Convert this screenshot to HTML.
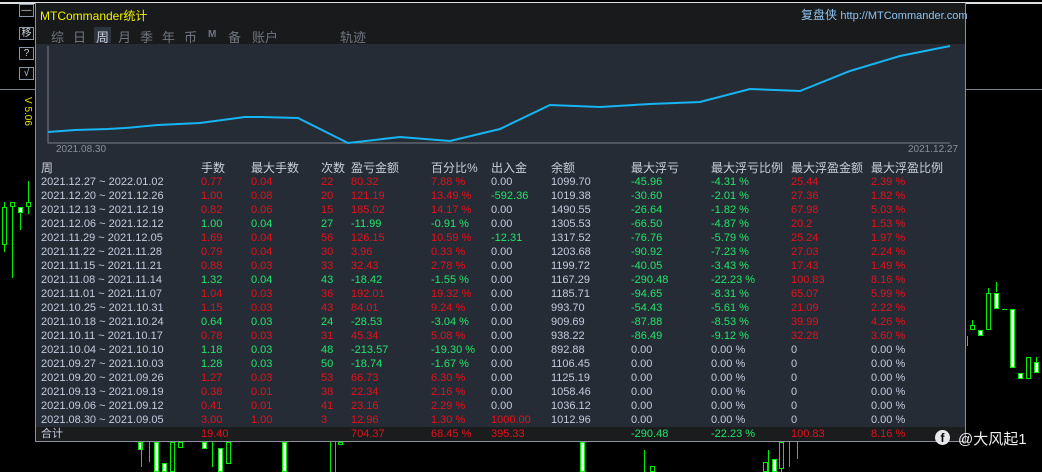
<!DOCTYPE html>
<html><head><meta charset="utf-8"><style>
*{margin:0;padding:0;box-sizing:border-box}
body{width:1042px;height:472px;background:#000;position:relative;overflow:hidden;font-family:"Liberation Sans","Noto Sans CJK SC",sans-serif;font-size:11px;color:#c3cde0}
.a{position:absolute}
.panel{left:35px;top:3px;width:931px;height:439px;background:#262c35;border-left:1px solid #8a909a;border-right:1px solid #8a909a;border-bottom:1px solid #8a909a}
.bar{left:36px;top:3px;width:929px;height:41px;background:#191a1b}
.r{position:absolute;left:0;width:1042px;height:14px;line-height:14px;white-space:nowrap}
.r span{position:absolute}
.r span:nth-child(1){left:41px}.r span:nth-child(2){left:201px}.r span:nth-child(3){left:251px}.r span:nth-child(4){left:321px}.r span:nth-child(5){left:351px}.r span:nth-child(6){left:431px}.r span:nth-child(7){left:491px}.r span:nth-child(8){left:551px}.r span:nth-child(9){left:631px}.r span:nth-child(10){left:711px}.r span:nth-child(11){left:791px}.r span:nth-child(12){left:871px}
.R{color:#e4101c}.G{color:#22e46a}
.h{font-size:12px;color:#c8d0dc}
.btn{left:19px;width:15px;height:13px;border:1px solid #8a96a8;color:#c8d0dc;font-size:10px;line-height:11px;text-align:center;background:#0a0a0a}
.tab{top:27px;font-size:13px;color:#6f7680}
.c{position:absolute;border:1px solid #00ee00;background:#000}
.w{position:absolute;width:1px;background:#00ee00}
</style></head><body>
<div class="a" style="left:0;top:2px;width:1042px;height:2px;background:#e0e0e0"></div>
<div class="a" style="left:0;top:89px;width:1042px;height:1px;background:#7a808a"></div>
<!-- left buttons -->
<div class="a btn" style="top:4px">—</div>
<div class="a btn" style="top:27px">移</div>
<div class="a btn" style="top:47px">?</div>
<div class="a btn" style="top:67px">√</div>
<div class="a" style="left:20px;top:97px;color:#e8e800;font-size:10px;transform:rotate(90deg);transform-origin:left top;left:33px;white-space:nowrap">V 5.06</div>
<!-- left candles -->
<div class="w" style="left:4px;top:202px;height:50px"></div><div class="c" style="left:2px;top:207px;width:5px;height:38px"></div>
<div class="w" style="left:12px;top:205px;height:73px"></div><div class="c" style="left:10px;top:202px;width:5px;height:5px"></div>
<div class="w" style="left:20px;top:210px;height:20px"></div><div class="c" style="left:18px;top:207px;width:5px;height:6px;background:#fff"></div>
<div class="w" style="left:28px;top:181px;height:33px"></div><div class="c" style="left:26px;top:202px;width:5px;height:5px"></div>
<!-- right candles -->
<div class="w" style="left:967px;top:336px;height:10px"></div>
<div class="w" style="left:972px;top:320px;height:10px"></div><div class="c" style="left:970px;top:325px;width:5px;height:5px"></div>
<div class="c" style="left:978px;top:330px;width:5px;height:6px;background:#fff"></div>
<div class="w" style="left:988px;top:288px;height:10px"></div><div class="c" style="left:986px;top:293px;width:5px;height:37px"></div>
<div class="w" style="left:996px;top:282px;height:10px"></div><div class="c" style="left:994px;top:293px;width:5px;height:16px;background:#fff"></div>
<div class="a" style="left:1002px;top:309px;width:5px;height:1px;background:#0e0"></div>
<div class="c" style="left:1010px;top:309px;width:5px;height:59px;background:#fff"></div>
<div class="c" style="left:1018px;top:373px;width:5px;height:6px;background:#fff"></div>
<div class="c" style="left:1026px;top:357px;width:5px;height:22px"></div>
<div class="w" style="left:1036px;top:357px;height:15px"></div><div class="c" style="left:1034px;top:362px;width:5px;height:11px;background:#fff"></div>
<!-- bottom candles -->
<div class="c" style="left:138px;top:442px;width:5px;height:8px;background:#fff"></div>
<div class="w" style="left:141px;top:442px;height:25px"></div>
<div class="w" style="left:149px;top:442px;height:20px"></div>
<div class="c" style="left:154px;top:442px;width:5px;height:30px;background:#fff"></div>
<div class="c" style="left:162px;top:463px;width:5px;height:9px;background:#fff"></div>
<div class="c" style="left:170px;top:442px;width:5px;height:30px"></div>
<div class="c" style="left:178px;top:442px;width:5px;height:6px"></div>
<div class="c" style="left:202px;top:442px;width:5px;height:7px;background:#fff"></div>
<div class="w" style="left:212px;top:442px;height:25px"></div>
<div class="c" style="left:218px;top:448px;width:5px;height:24px;background:#fff"></div>
<div class="c" style="left:226px;top:442px;width:5px;height:22px"></div>
<div class="c" style="left:282px;top:442px;width:5px;height:30px;background:#fff"></div>
<div class="w" style="left:330px;top:442px;height:30px"></div>
<div class="w" style="left:335px;top:442px;height:30px"></div>
<div class="c" style="left:338px;top:442px;width:5px;height:3px"></div>
<div class="w" style="left:644px;top:450px;height:22px"></div>
<div class="c" style="left:650px;top:466px;width:5px;height:6px"></div>
<div class="c" style="left:763px;top:462px;width:5px;height:10px"></div>
<div class="w" style="left:768px;top:450px;height:22px"></div>
<div class="c" style="left:772px;top:459px;width:5px;height:13px;background:#fff"></div>
<div class="w" style="left:781px;top:442px;height:30px"></div><div class="c" style="left:779px;top:442px;width:5px;height:27px"></div>
<div class="w" style="left:789px;top:442px;height:25px"></div>
<div class="w" style="left:797px;top:442px;height:17px"></div>
<div class="c" style="left:580px;top:442px;width:5px;height:30px;background:#fff"></div>
<!-- panel -->
<div class="a panel"></div>
<div class="a bar"></div>
<div class="a" style="left:40px;top:7px;color:#f0f000;font-size:12px">MTCommander统计</div>
<div class="a" style="left:801px;top:6px;color:#8ec4f0;font-size:12px">复盘侠 <span style="font-size:11px">http://MTCommander.com</span></div>
<div class="a" style="left:94px;top:27px;width:17px;height:16px;background:#2c3440"></div>
<div class="a tab" style="left:51px">综</div><div class="a tab" style="left:73px">日</div><div class="a tab" style="left:96px;color:#c8d0dc">周</div><div class="a tab" style="left:118px">月</div><div class="a tab" style="left:140px">季</div><div class="a tab" style="left:162px">年</div><div class="a tab" style="left:184px">币</div><div class="a tab" style="left:208px;font-size:10px;top:29px;font-weight:bold">M</div><div class="a tab" style="left:228px">备</div><div class="a tab" style="left:252px">账户</div><div class="a tab" style="left:340px">轨迹</div>
<svg class="a" style="left:0;top:0" width="1042" height="160">
<polyline points="48,46 48,143 950,143" fill="none" stroke="#7a7f86" stroke-width="1"/>
<polyline points="48,132 75,130 108,129 125,128 158,125 200,123 245,117 262,117 298,118 348,143 400,137 450,141 500,129 550,105 600,107 650,104 700,102 750,89 800,91 850,71 900,56 950,46" fill="none" stroke="#16b4f2" stroke-width="2"/>
</svg>
<div class="a" style="left:56px;top:144px;font-size:10px;color:#8a909a">2021.08.30</div>
<div class="a" style="left:908px;top:144px;font-size:10px;color:#8a909a">2021.12.27</div>
<div class="r h" style="top:161px"><span>周</span><span>手数</span><span>最大手数</span><span>次数</span><span>盈亏金额</span><span>百分比%</span><span>出入金</span><span>余额</span><span>最大浮亏</span><span>最大浮亏比例</span><span>最大浮盈金额</span><span>最大浮盈比例</span></div>
<div class="r" style="top:175px"><span>2021.12.27 ~ 2022.01.02</span><span class="R">0.77</span><span class="R">0.04</span><span class="R">22</span><span class="R">80.32</span><span class="R">7.88 %</span><span>0.00</span><span>1099.70</span><span class="G">-45.96</span><span class="G">-4.31 %</span><span class="R">25.44</span><span class="R">2.39 %</span></div>
<div class="r" style="top:189px"><span>2021.12.20 ~ 2021.12.26</span><span class="R">1.00</span><span class="R">0.08</span><span class="R">20</span><span class="R">121.19</span><span class="R">13.49 %</span><span class="G">-592.36</span><span>1019.38</span><span class="G">-30.60</span><span class="G">-2.01 %</span><span class="R">27.36</span><span class="R">1.82 %</span></div>
<div class="r" style="top:203px"><span>2021.12.13 ~ 2021.12.19</span><span class="R">0.82</span><span class="R">0.06</span><span class="R">15</span><span class="R">185.02</span><span class="R">14.17 %</span><span>0.00</span><span>1490.55</span><span class="G">-26.64</span><span class="G">-1.82 %</span><span class="R">67.98</span><span class="R">5.03 %</span></div>
<div class="r" style="top:217px"><span>2021.12.06 ~ 2021.12.12</span><span class="G">1.00</span><span class="G">0.04</span><span class="G">27</span><span class="G">-11.99</span><span class="G">-0.91 %</span><span>0.00</span><span>1305.53</span><span class="G">-66.50</span><span class="G">-4.87 %</span><span class="R">20.2</span><span class="R">1.53 %</span></div>
<div class="r" style="top:231px"><span>2021.11.29 ~ 2021.12.05</span><span class="R">1.69</span><span class="R">0.04</span><span class="R">56</span><span class="R">126.15</span><span class="R">10.59 %</span><span class="G">-12.31</span><span>1317.52</span><span class="G">-76.76</span><span class="G">-5.79 %</span><span class="R">25.24</span><span class="R">1.97 %</span></div>
<div class="r" style="top:245px"><span>2021.11.22 ~ 2021.11.28</span><span class="R">0.79</span><span class="R">0.04</span><span class="R">30</span><span class="R">3.96</span><span class="R">0.33 %</span><span>0.00</span><span>1203.68</span><span class="G">-90.92</span><span class="G">-7.23 %</span><span class="R">27.03</span><span class="R">2.24 %</span></div>
<div class="r" style="top:259px"><span>2021.11.15 ~ 2021.11.21</span><span class="R">0.88</span><span class="R">0.03</span><span class="R">33</span><span class="R">32.43</span><span class="R">2.78 %</span><span>0.00</span><span>1199.72</span><span class="G">-40.05</span><span class="G">-3.43 %</span><span class="R">17.43</span><span class="R">1.49 %</span></div>
<div class="r" style="top:273px"><span>2021.11.08 ~ 2021.11.14</span><span class="G">1.32</span><span class="G">0.04</span><span class="G">43</span><span class="G">-18.42</span><span class="G">-1.55 %</span><span>0.00</span><span>1167.29</span><span class="G">-290.48</span><span class="G">-22.23 %</span><span class="R">100.83</span><span class="R">8.16 %</span></div>
<div class="r" style="top:287px"><span>2021.11.01 ~ 2021.11.07</span><span class="R">1.04</span><span class="R">0.03</span><span class="R">36</span><span class="R">192.01</span><span class="R">19.32 %</span><span>0.00</span><span>1185.71</span><span class="G">-94.65</span><span class="G">-8.31 %</span><span class="R">65.07</span><span class="R">5.99 %</span></div>
<div class="r" style="top:301px"><span>2021.10.25 ~ 2021.10.31</span><span class="R">1.15</span><span class="R">0.03</span><span class="R">43</span><span class="R">84.01</span><span class="R">9.24 %</span><span>0.00</span><span>993.70</span><span class="G">-54.43</span><span class="G">-5.61 %</span><span class="R">21.09</span><span class="R">2.22 %</span></div>
<div class="r" style="top:315px"><span>2021.10.18 ~ 2021.10.24</span><span class="G">0.64</span><span class="G">0.03</span><span class="G">24</span><span class="G">-28.53</span><span class="G">-3.04 %</span><span>0.00</span><span>909.69</span><span class="G">-87.88</span><span class="G">-8.53 %</span><span class="R">39.99</span><span class="R">4.26 %</span></div>
<div class="r" style="top:329px"><span>2021.10.11 ~ 2021.10.17</span><span class="R">0.78</span><span class="R">0.03</span><span class="R">31</span><span class="R">45.34</span><span class="R">5.08 %</span><span>0.00</span><span>938.22</span><span class="G">-86.49</span><span class="G">-9.12 %</span><span class="R">32.28</span><span class="R">3.60 %</span></div>
<div class="r" style="top:343px"><span>2021.10.04 ~ 2021.10.10</span><span class="G">1.18</span><span class="G">0.03</span><span class="G">48</span><span class="G">-213.57</span><span class="G">-19.30 %</span><span>0.00</span><span>892.88</span><span>0.00</span><span>0.00 %</span><span>0</span><span>0.00 %</span></div>
<div class="r" style="top:357px"><span>2021.09.27 ~ 2021.10.03</span><span class="G">1.28</span><span class="G">0.03</span><span class="G">50</span><span class="G">-18.74</span><span class="G">-1.67 %</span><span>0.00</span><span>1106.45</span><span>0.00</span><span>0.00 %</span><span>0</span><span>0.00 %</span></div>
<div class="r" style="top:371px"><span>2021.09.20 ~ 2021.09.26</span><span class="R">1.27</span><span class="R">0.03</span><span class="R">53</span><span class="R">66.73</span><span class="R">6.30 %</span><span>0.00</span><span>1125.19</span><span>0.00</span><span>0.00 %</span><span>0</span><span>0.00 %</span></div>
<div class="r" style="top:385px"><span>2021.09.13 ~ 2021.09.19</span><span class="R">0.38</span><span class="R">0.01</span><span class="R">38</span><span class="R">22.34</span><span class="R">2.16 %</span><span>0.00</span><span>1058.46</span><span>0.00</span><span>0.00 %</span><span>0</span><span>0.00 %</span></div>
<div class="r" style="top:399px"><span>2021.09.06 ~ 2021.09.12</span><span class="R">0.41</span><span class="R">0.01</span><span class="R">41</span><span class="R">23.16</span><span class="R">2.29 %</span><span>0.00</span><span>1036.12</span><span>0.00</span><span>0.00 %</span><span>0</span><span>0.00 %</span></div>
<div class="r" style="top:413px"><span>2021.08.30 ~ 2021.09.05</span><span class="R">3.00</span><span class="R">1.00</span><span class="R">3</span><span class="R">12.96</span><span class="R">1.30 %</span><span class="R">1000.00</span><span>1012.96</span><span>0.00</span><span>0.00 %</span><span>0</span><span>0.00 %</span></div>
<div class="a" style="left:36px;top:427px;width:929px;height:14px;background:#1b1c1d"></div>
<div class="r" style="top:427px"><span>合计</span><span class="R">19.40</span><span></span><span></span><span class="R">704.37</span><span class="R">68.45 %</span><span class="R">395.33</span><span></span><span class="G">-290.48</span><span class="G">-22.23 %</span><span class="R">100.83</span><span class="R">8.16 %</span></div>
<!-- watermark -->
<div class="a" style="left:935px;top:430px;width:15px;height:15px;border-radius:50%;background:#e8e8e8;color:#000;font-weight:bold;font-size:12px;line-height:16px;text-align:center">f</div>
<div class="a" style="left:958px;top:428px;color:#f0f0f0;font-size:15px">@大风起1</div>
</body></html>
